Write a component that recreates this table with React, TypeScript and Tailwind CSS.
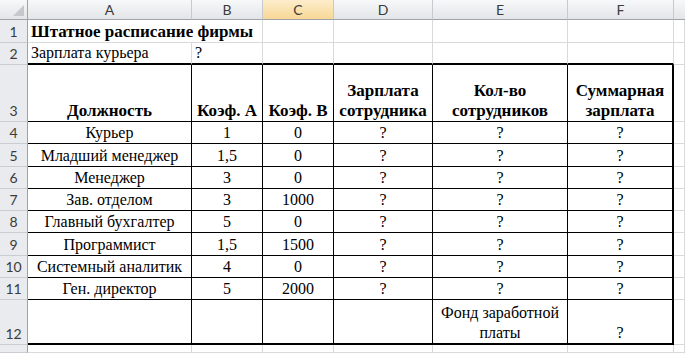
import React from "react";

const COLS = ["A", "B", "C", "D", "E", "F"];

// rows 4..11 of the staff table
const staff: [string, string, string][] = [
  ["Курьер", "1", "0"],
  ["Младший менеджер", "1,5", "0"],
  ["Менеджер", "3", "0"],
  ["Зав. отделом", "3", "1000"],
  ["Главный бухгалтер", "5", "0"],
  ["Программист", "1,5", "1500"],
  ["Системный аналитик", "4", "0"],
  ["Ген. директор", "5", "2000"],
];

const serif = "font-['Liberation_Serif','Times_New_Roman',serif]";

function RowHead({ n }: { n: string }) {
  return (
    <div className="flex items-end justify-center overflow-hidden border-r border-b border-r-[#9ea3aa] border-b-[#c9ccd1] bg-[#e9ebee] pb-[1px] font-['Lato','Noto_Sans',sans-serif] text-[14px] leading-[18px] text-[#3b3b3b]">
      {n}
    </div>
  );
}

function Cell({
  children,
  table = false,
  lastCol = false,
  lastRow = false,
  topEdge = false,
  align = "center",
  bold = false,
  span2 = false,
}: {
  children?: React.ReactNode;
  table?: boolean;
  lastCol?: boolean;
  lastRow?: boolean;
  topEdge?: boolean;
  align?: "center" | "left";
  bold?: boolean;
  span2?: boolean;
}) {
  let border = "border-r border-b border-[#d8d9db]";
  if (table) {
    border = `border-black ${lastCol ? "border-r-2" : "border-r"} ${lastRow ? "border-b-2" : "border-b"}`;
  } else if (topEdge) {
    border = "border-r border-r-[#d8d9db] border-b-2 border-b-black";
  }
  return (
    <div
      className={`flex items-end overflow-visible whitespace-nowrap ${serif} leading-[20px] text-black ${border} ${
        align === "center" ? "justify-center text-center" : "justify-start pl-[3px]"
      } ${bold ? "text-[17px] font-bold" : "text-[16px]"} ${span2 ? "col-span-2" : ""}`}
    >
      {children}
    </div>
  );
}

export default function App() {
  return (
    <div className="h-[353px] w-[685px] overflow-hidden bg-white">
      <div className="grid h-full grid-cols-[28px_164px_71px_71px_99px_135px_106px_1fr] grid-rows-[20px_23px_22px_57px_repeat(8,22.25px)_45px_1fr]">
        {/* column headers */}
        <div className="relative border-r border-b border-r-[#9ea3aa] border-b-[#9ea3aa] bg-gradient-to-b from-[#f7f8f9] to-[#e3e5e8]">
          <svg className="absolute right-[3px] bottom-[3px]" width="11" height="11" viewBox="0 0 11 11">
            <polygon points="11,0 11,11 0,11" fill="#c4c7cc" />
          </svg>
        </div>
        {COLS.map((c) => (
          <div
            key={c}
            className={`flex items-center justify-center border-r border-b border-r-[#c6c9ce] border-b-[#9ea3aa] font-['Lato','Noto_Sans',sans-serif] text-[14px] text-[#3b3b3b] ${
              c === "C"
                ? "bg-gradient-to-b from-[#fdedcb] to-[#f7d795]"
                : "bg-gradient-to-b from-[#f7f8f9] to-[#e3e5e8]"
            }`}
          >
            {c}
          </div>
        ))}
        <div className="border-b border-b-[#9ea3aa] bg-gradient-to-b from-[#f7f8f9] to-[#e3e5e8]" />

        {/* row 1: title overflows into B, so no gridline there */}
        <RowHead n="1" />
        <Cell align="left" bold span2>
          Штатное расписание фирмы
        </Cell>
        <Cell />
        <Cell />
        <Cell />
        <Cell />
        <Cell />

        {/* row 2 */}
        <RowHead n="2" />
        <Cell align="left" topEdge>
          Зарплата курьера
        </Cell>
        <Cell align="left" topEdge>
          ?
        </Cell>
        <Cell topEdge />
        <Cell topEdge />
        <Cell topEdge />
        <Cell topEdge />
        <Cell />

        {/* row 3 */}
        <RowHead n="3" />
        <Cell table bold>
          Должность
        </Cell>
        <Cell table bold>
          Коэф. А
        </Cell>
        <Cell table bold>
          Коэф. В
        </Cell>
        <Cell table bold>
          <span>
            Зарплата
            <br />
            сотрудника
          </span>
        </Cell>
        <Cell table bold>
          <span>
            Кол-во
            <br />
            сотрудников
          </span>
        </Cell>
        <Cell table bold lastCol>
          <span>
            Суммарная
            <br />
            зарплата
          </span>
        </Cell>
        <Cell />

        {/* rows 4-11 */}
        {staff.map(([post, a, b], i) => (
          <React.Fragment key={post}>
            <RowHead n={String(i + 4)} />
            <Cell table>{post}</Cell>
            <Cell table>{a}</Cell>
            <Cell table>{b}</Cell>
            <Cell table>?</Cell>
            <Cell table>?</Cell>
            <Cell table lastCol>
              ?
            </Cell>
            <Cell />
          </React.Fragment>
        ))}

        {/* row 12 */}
        <RowHead n="12" />
        <Cell table lastRow />
        <Cell table lastRow />
        <Cell table lastRow />
        <Cell table lastRow />
        <Cell table lastRow>
          <span>
            Фонд заработной
            <br />
            платы
          </span>
        </Cell>
        <Cell table lastRow lastCol>
          ?
        </Cell>
        <Cell />

        {/* row 13, only its top edge shows */}
        <RowHead n="" />
        <Cell />
        <Cell />
        <Cell />
        <Cell />
        <Cell />
        <Cell />
        <Cell />
      </div>
    </div>
  );
}
